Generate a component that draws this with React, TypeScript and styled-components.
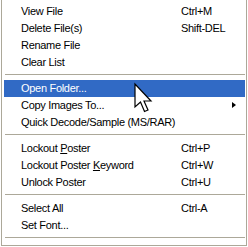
import styled, { createGlobalStyle } from "styled-components";

const GlobalStyle = createGlobalStyle`
  html, body {
    margin: 0;
    padding: 0;
    background: #ffffff;
  }
  body {
    font-family: "Liberation Sans", Arial, sans-serif;
    font-size: 11px;
    letter-spacing: -0.3px;
  }
`;

type Entry =
  | { kind: "item"; label: React.ReactNode; shortcut?: string; active?: boolean; submenu?: boolean }
  | { kind: "sep" };

const entries: Entry[] = [
  { kind: "item", label: "View File", shortcut: "Ctrl+M" },
  { kind: "item", label: "Delete File(s)", shortcut: "Shift-DEL" },
  { kind: "item", label: "Rename File" },
  { kind: "item", label: "Clear List" },
  { kind: "sep" },
  { kind: "item", label: "Open Folder...", active: true },
  { kind: "item", label: "Copy Images To...", submenu: true },
  { kind: "item", label: "Quick Decode/Sample (MS/RAR)" },
  { kind: "sep" },
  {
    kind: "item",
    label: (
      <>
        Lockout <u>P</u>oster
      </>
    ),
    shortcut: "Ctrl+P",
  },
  {
    kind: "item",
    label: (
      <>
        Lockout Poster <u>K</u>eyword
      </>
    ),
    shortcut: "Ctrl+W",
  },
  { kind: "item", label: "Unlock Poster", shortcut: "Ctrl+U" },
  { kind: "sep" },
  { kind: "item", label: "Select All", shortcut: "Ctrl-A" },
  { kind: "item", label: "Set Font..." },
  { kind: "sep" },
];

export default function App() {
  return (
    <>
      <GlobalStyle />
      <Menu>
        {entries.map((e, i) =>
          e.kind === "sep" ? (
            <Separator key={i} />
          ) : (
            <Item key={i} $active={!!e.active}>
              <Label>{e.label}</Label>
              <Shortcut>{e.shortcut}</Shortcut>
              {e.submenu && <SubArrow />}
              {e.active && (
                <Cursor width="19" height="30" viewBox="0 0 19 30">
                  <path
                    d="M1 1 L1 24 L6.5 19 L10.5 28.5 L14 27 L10 18 L17 18 Z"
                    fill="#ffffff"
                    stroke="#000000"
                    strokeWidth="1.2"
                    strokeLinejoin="miter"
                  />
                </Cursor>
              )}
            </Item>
          )
        )}
      </Menu>
    </>
  );
}

const Menu = styled.div`
  box-sizing: border-box;
  width: 246px;
  margin-left: 1px;
  border: 1px solid #aca899;
  border-top: none;
  padding: 3px 1px 2px 2px;
  background: #ffffff;
  display: flex;
  flex-direction: column;
`;

const Item = styled.div<{ $active: boolean }>`
  position: relative;
  height: 17px;
  line-height: 17px;
  padding-left: 17px;
  display: grid;
  grid-template-columns: 160px auto;
  white-space: nowrap;
  color: ${({ $active }) => ($active ? "#ffffff" : "#000000")};
  background: ${({ $active }) => ($active ? "#316ac5" : "transparent")};
`;

const Label = styled.span``;

const Shortcut = styled.span``;

const Separator = styled.div`
  height: 9px;
  margin-left: 1px;
  display: flex;
  align-items: flex-start;
  &::before {
    content: "";
    display: block;
    width: 100%;
    height: 1px;
    margin-top: 3px;
    background: #aca899;
  }
`;

const SubArrow = styled.span`
  position: absolute;
  right: 9px;
  top: 5px;
  width: 0;
  height: 0;
  border-top: 3.5px solid transparent;
  border-bottom: 3.5px solid transparent;
  border-left: 4px solid #000000;
`;

const Cursor = styled.svg`
  position: absolute;
  left: 130px;
  top: 3px;
  z-index: 2;
  overflow: visible;
`;
